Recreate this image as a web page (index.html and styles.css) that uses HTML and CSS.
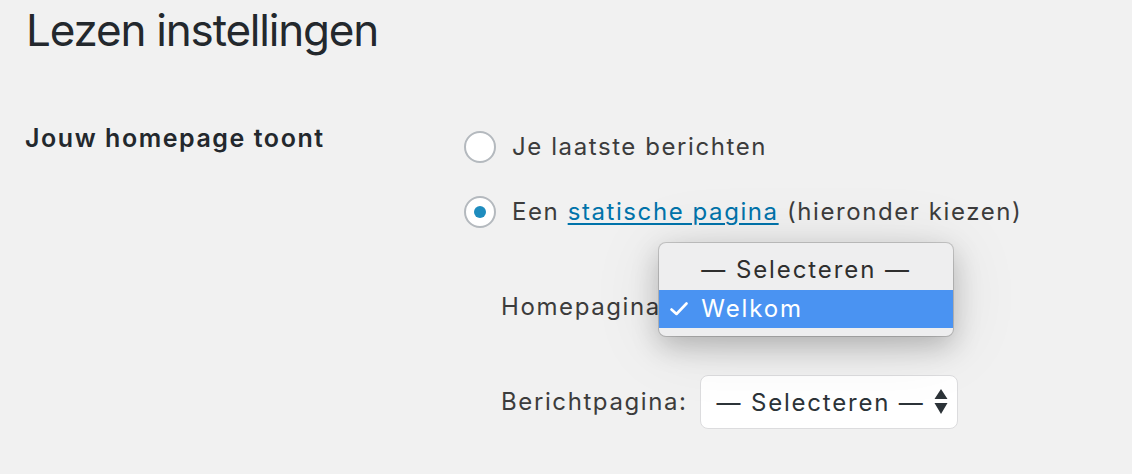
FILE: index.html
```html
<!DOCTYPE html>
<html lang="nl">
<head>
<meta charset="utf-8">
<title>Lezen instellingen</title>
<link rel="stylesheet" href="styles.css">
</head>
<body>
<div class="wrap">
  <h1 class="title">Lezen instellingen</h1>
  <div class="form-row">
    <div class="th">Jouw homepage toont</div>
    <div class="td">
      <div class="radios">
        <label class="radio-row"><span class="radio"></span><span class="rtext">Je laatste berichten</span></label>
        <label class="radio-row"><span class="radio checked"></span><span class="rtext">Een <a class="link" href="#">statische pagina</a> (hieronder kiezen)</span></label>
      </div>
      <div class="pages">
        <div class="page-row">
          <span class="lbl">Homepagina:</span>
          <div class="select-wrap">
            <div class="select focused"></div>
            <div class="popup">
              <div class="opt">— Selecteren —</div>
              <div class="opt active">
                <svg class="check" width="18" height="14" viewBox="0 0 18 14"><path d="M1.5 7.5 L6.5 12 L16.5 1.5" fill="none" stroke="#fff" stroke-width="2.6" stroke-linecap="round" stroke-linejoin="round"/></svg>
                Welkom
              </div>
            </div>
          </div>
        </div>
        <div class="page-row second">
          <span class="lbl">Berichtpagina:</span>
          <div class="select wide">
            <span class="sel-text">— Selecteren —</span>
            <svg class="arrows" width="14" height="26" viewBox="0 0 14 26"><path d="M7 0 L13.5 10 L0.5 10 Z M0.5 14 L13.5 14 L7 25 Z" fill="#2c3338"/></svg>
          </div>
        </div>
      </div>
    </div>
  </div>
</div>
</body>
</html>
```

FILE: styles.css
```css
html, body {
  margin: 0;
  padding: 0;
  background: #f1f1f1;
}
body {
  font-family: Inter, "Liberation Sans", Arial, sans-serif;
  color: #444;
}
.wrap {
  padding: 8px 0 0 25px;
}
.title {
  margin: 0 0 66px 1px;
  font-size: 44px;
  line-height: 44px;
  font-weight: 400;
  letter-spacing: -1.2px;
  color: #23282d;
}
.form-row {
  display: grid;
  grid-template-columns: 439px 1fr;
}
.th {
  font-size: 25px;
  line-height: 40px;
  font-weight: 600;
  letter-spacing: 1.55px;
  color: #23282d;
}
.td {
  padding-top: 9px;
}
.radios {
  display: flex;
  flex-direction: column;
  gap: 25px;
}
.radio-row {
  display: flex;
  align-items: center;
  height: 40px;
  font-size: 24px;
  line-height: 40px;
  letter-spacing: 1.58px;
  color: #3c3c3c;
}
.radio {
  box-sizing: border-box;
  width: 32px;
  height: 32px;
  border-radius: 50%;
  border: 2px solid #b4b9be;
  background: #fff;
  margin-right: 16px;
  display: flex;
  align-items: center;
  justify-content: center;
  flex: none;
}
.radio.checked::after {
  content: "";
  width: 12px;
  height: 12px;
  border-radius: 50%;
  background: #1e8cbe;
}
.link {
  color: #0073aa;
  text-decoration: underline;
  text-decoration-thickness: 1.5px;
  text-underline-offset: 3px;
}
.pages {
  margin-top: 48px;
  padding-left: 37px;
}
.page-row {
  display: flex;
  align-items: center;
  gap: 12px;
  height: 54px;
}
.page-row.second {
  margin-top: 41px;
}
.lbl {
  font-size: 24px;
  line-height: 40px;
  letter-spacing: 1.6px;
  color: #3c3c3c;
}
.select-wrap {
  position: relative;
}
.select {
  box-sizing: border-box;
  width: 255px;
  height: 54px;
  background: #fff;
  border: 1px solid #dcdcde;
  border-radius: 8px;
  display: flex;
  align-items: center;
  justify-content: space-between;
  padding: 0 8px 0 16px;
  font-size: 24px;
  letter-spacing: 1.8px;
  color: #2c3338;
}
.select.wide {
  width: 258px;
}
.select.focused {
  border-color: #3582c4;
  box-shadow: 0 0 0 2px #3582c4;
}
.arrows {
  display: block;
  margin-right: 1px;
}
.popup {
  position: absolute;
  left: -22px;
  top: -37px;
  box-sizing: border-box;
  width: 294px;
  height: 93px;
  padding: 7px 0 8px;
  background: #eeeeef;
  border-radius: 7px;
  box-shadow: 0 0 0 1px rgba(0, 0, 0, 0.16), 0 10px 28px rgba(0, 0, 0, 0.22), 0 6px 70px rgba(0, 0, 0, 0.10);
}
.opt {
  position: relative;
  height: 40px;
  line-height: 40px;
  padding-left: 42px;
  font-size: 24px;
  letter-spacing: 1.9px;
  color: #2e2e2e;
}
.opt.active {
  height: 38px;
  line-height: 38px;
  background: #4a93f2;
  color: #fff;
}
.check {
  position: absolute;
  left: 11px;
  top: 12px;
}
```
